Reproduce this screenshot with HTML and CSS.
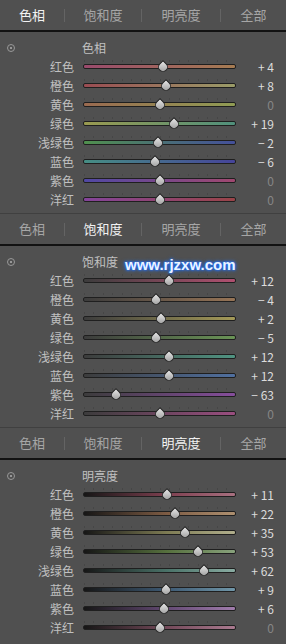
FILE: index.html
```html
<!DOCTYPE html>
<html>
    <head>
        <meta charset="UTF-8">
        <title>HSL</title>
        <link rel="stylesheet" href="styles.css">
    </head>
    <body>
        <div class="panel">
            <div class="section">
                <div class="tabs">
                    <span class="tab tab-1 active">色相</span><span class="sep"></span>
                    <span class="tab tab-2">饱和度</span><span class="sep"></span>
                    <span class="tab tab-3">明亮度</span><span class="sep"></span>
                    <span class="tab tab-4">全部</span>
                </div>
                <div class="body">
                    <div class="row title-row"><span class="target"></span><span class="title">色相</span></div>
                    <div class="row"><span class="label">红色</span><div class="track hue-red"><span class="thumb" style="left:52%"></span></div><span class="value">+ 4</span></div>
                    <div class="row"><span class="label">橙色</span><div class="track hue-orange"><span class="thumb" style="left:54%"></span></div><span class="value">+ 8</span></div>
                    <div class="row"><span class="label">黄色</span><div class="track hue-yellow"><span class="thumb" style="left:50%"></span></div><span class="value zero">0</span></div>
                    <div class="row"><span class="label">绿色</span><div class="track hue-green"><span class="thumb" style="left:59.5%"></span></div><span class="value">+ 19</span></div>
                    <div class="row"><span class="label">浅绿色</span><div class="track hue-aqua"><span class="thumb" style="left:49%"></span></div><span class="value">− 2</span></div>
                    <div class="row"><span class="label">蓝色</span><div class="track hue-blue"><span class="thumb" style="left:47%"></span></div><span class="value">− 6</span></div>
                    <div class="row"><span class="label">紫色</span><div class="track hue-purple"><span class="thumb" style="left:50%"></span></div><span class="value zero">0</span></div>
                    <div class="row"><span class="label">洋红</span><div class="track hue-magenta"><span class="thumb" style="left:50%"></span></div><span class="value zero">0</span></div>
                </div>
            </div>

            <div class="section">
                <div class="tabs">
                    <span class="tab tab-1">色相</span><span class="sep"></span>
                    <span class="tab tab-2 active">饱和度</span><span class="sep"></span>
                    <span class="tab tab-3">明亮度</span><span class="sep"></span>
                    <span class="tab tab-4">全部</span>
                </div>
                <div class="body">
                    <div class="row title-row"><span class="target"></span><span class="title">饱和度</span></div>
                    <div class="row"><span class="label">红色</span><div class="track sat-red"><span class="thumb" style="left:56%"></span></div><span class="value">+ 12</span></div>
                    <div class="row"><span class="label">橙色</span><div class="track sat-orange"><span class="thumb" style="left:48%"></span></div><span class="value">− 4</span></div>
                    <div class="row"><span class="label">黄色</span><div class="track sat-yellow"><span class="thumb" style="left:51%"></span></div><span class="value">+ 2</span></div>
                    <div class="row"><span class="label">绿色</span><div class="track sat-green"><span class="thumb" style="left:47.5%"></span></div><span class="value">− 5</span></div>
                    <div class="row"><span class="label">浅绿色</span><div class="track sat-aqua"><span class="thumb" style="left:56%"></span></div><span class="value">+ 12</span></div>
                    <div class="row"><span class="label">蓝色</span><div class="track sat-blue"><span class="thumb" style="left:56%"></span></div><span class="value">+ 12</span></div>
                    <div class="row"><span class="label">紫色</span><div class="track sat-purple"><span class="thumb" style="left:21%"></span></div><span class="value">− 63</span></div>
                    <div class="row"><span class="label">洋红</span><div class="track sat-magenta"><span class="thumb" style="left:50%"></span></div><span class="value zero">0</span></div>
                </div>
                <div class="watermark">www.rjzxw.com</div>
            </div>

            <div class="section">
                <div class="tabs">
                    <span class="tab tab-1">色相</span><span class="sep"></span>
                    <span class="tab tab-2">饱和度</span><span class="sep"></span>
                    <span class="tab tab-3 active">明亮度</span><span class="sep"></span>
                    <span class="tab tab-4">全部</span>
                </div>
                <div class="body">
                    <div class="row title-row"><span class="target"></span><span class="title">明亮度</span></div>
                    <div class="row"><span class="label">红色</span><div class="track lum-red"><span class="thumb" style="left:55%"></span></div><span class="value">+ 11</span></div>
                    <div class="row"><span class="label">橙色</span><div class="track lum-orange"><span class="thumb" style="left:60.5%"></span></div><span class="value">+ 22</span></div>
                    <div class="row"><span class="label">黄色</span><div class="track lum-yellow"><span class="thumb" style="left:67%"></span></div><span class="value">+ 35</span></div>
                    <div class="row"><span class="label">绿色</span><div class="track lum-green"><span class="thumb" style="left:75.5%"></span></div><span class="value">+ 53</span></div>
                    <div class="row"><span class="label">浅绿色</span><div class="track lum-aqua"><span class="thumb" style="left:79.5%"></span></div><span class="value">+ 62</span></div>
                    <div class="row"><span class="label">蓝色</span><div class="track lum-blue"><span class="thumb" style="left:54.5%"></span></div><span class="value">+ 9</span></div>
                    <div class="row"><span class="label">紫色</span><div class="track lum-purple"><span class="thumb" style="left:53%"></span></div><span class="value">+ 6</span></div>
                    <div class="row"><span class="label">洋红</span><div class="track lum-magenta"><span class="thumb" style="left:50%"></span></div><span class="value zero">0</span></div>
                </div>
            </div>
        </div>
    </body>
</html>
```

FILE: styles.css
```css
body {
    margin: 0;
    background-color: #505050;
    font-family: "Noto Sans CJK SC", "Noto Sans", sans-serif;
    color: #c0c0c0;
}
.panel {
    width: 286px;
}
.section {
    position: relative;
    border-top: 1px solid #404040;
}
.section:first-child {
    border-top: none;
}
.tabs {
    display: flex;
    align-items: center;
    height: 30px;
    border-bottom: 2px solid #121212;
    font-size: 13px;
    color: #a6a6a6;
}
.tab {
    text-align: center;
    line-height: 30px;
}
.tab-1 { width: 64px; }
.tab-2 { width: 76px; }
.tab-3 { width: 78px; }
.tab-4 { width: 65px; }
.tab.active {
    color: #f2f2f2;
}
.sep {
    width: 1px;
    height: 13px;
    background-color: #646464;
}
.body {
    padding: 6px 0 4px;
}
.row {
    display: grid;
    grid-template-columns: 74px 162px 38px;
    align-items: center;
    height: 19px;
    font-size: 12px;
}
.row > .track {
    margin-left: 9px;
    width: 151px;
}
.label {
    text-align: right;
    line-height: 19px;
}
.value {
    text-align: right;
    color: #dcdcdc;
    line-height: 19px;
}
.value.zero {
    color: #868686;
}
.title-row .title {
    margin-left: 8px;
    line-height: 19px;
}
.target {
    width: 6px;
    height: 6px;
    margin-left: 7px;
    border: 1px solid #989898;
    border-radius: 50%;
    position: relative;
}
.target::after {
    content: "";
    position: absolute;
    left: 2px;
    top: 2px;
    width: 2px;
    height: 2px;
    background-color: #989898;
}
.track {
    position: relative;
    height: 3px;
    border: 1px solid #1f1f1f;
    border-radius: 2px;
}
.track::before {
    content: "";
    position: absolute;
    left: 0;
    right: 0;
    top: -5px;
    height: 2px;
    background: repeating-linear-gradient(to right, #464646 0 1px, transparent 1px 9.5px);
}
.thumb {
    position: absolute;
    top: -3px;
    width: 8px;
    height: 8px;
    margin-left: -5px;
    background: linear-gradient(135deg, #e6e6e6, #9c9c9c);
    border: 1px solid #2e2e2e;
    border-radius: 0 50% 50% 50%;
    transform: rotate(45deg);
}

/* hue */
.hue-red { background: linear-gradient(to right, #9a4a6c, #a67c52); }
.hue-orange { background: linear-gradient(to right, #9a4c52, #9a9c68); }
.hue-yellow { background: linear-gradient(to right, #9a6a50, #909c54); }
.hue-green { background: linear-gradient(to right, #9a9a50, #50907c); }
.hue-aqua { background: linear-gradient(to right, #50904e, #44509a); }
.hue-blue { background: linear-gradient(to right, #468e84, #46449a); }
.hue-purple { background: linear-gradient(to right, #5048a4, #a04870); }
.hue-magenta { background: linear-gradient(to right, #84449a, #9a4448); }

/* saturation */
.sat-red { background: linear-gradient(to right, #3c3c3c, #b05070); }
.sat-orange { background: linear-gradient(to right, #3c3c3c, #967456); }
.sat-yellow { background: linear-gradient(to right, #3c3c3c, #a49a58); }
.sat-green { background: linear-gradient(to right, #3c3c3c, #6a9456); }
.sat-aqua { background: linear-gradient(to right, #3c3c3c, #509482); }
.sat-blue { background: linear-gradient(to right, #3c3c3c, #5070a0); }
.sat-purple { background: linear-gradient(to right, #3c3c3c, #864e9c); }
.sat-magenta { background: linear-gradient(to right, #3c3c3c, #9a4e80); }

/* luminance */
.lum-red { background: linear-gradient(to right, #161616, #7e4050 55%, #a87080); }
.lum-orange { background: linear-gradient(to right, #161616, #7e5c44 55%, #ae9070); }
.lum-yellow { background: linear-gradient(to right, #161616, #7e7c54 55%, #b0ae8c); }
.lum-green { background: linear-gradient(to right, #161616, #56703e 55%, #88a27c); }
.lum-aqua { background: linear-gradient(to right, #161616, #4a7268 55%, #8aaca2); }
.lum-blue { background: linear-gradient(to right, #161616, #3e5a74 55%, #7096a8); }
.lum-purple { background: linear-gradient(to right, #161616, #644a74 55%, #a07cac); }
.lum-magenta { background: linear-gradient(to right, #161616, #744a5a 55%, #aa7a90); }

.watermark {
    position: absolute;
    left: 125px;
    top: 42px;
    font-family: "Liberation Sans", Arial, sans-serif;
    font-weight: bold;
    font-size: 15px;
    color: #eaf4ff;
    text-shadow: 0 0 2px #1c6cff, 0 0 3px #1c6cff, 0 0 4px #2a7aff;
}
```
